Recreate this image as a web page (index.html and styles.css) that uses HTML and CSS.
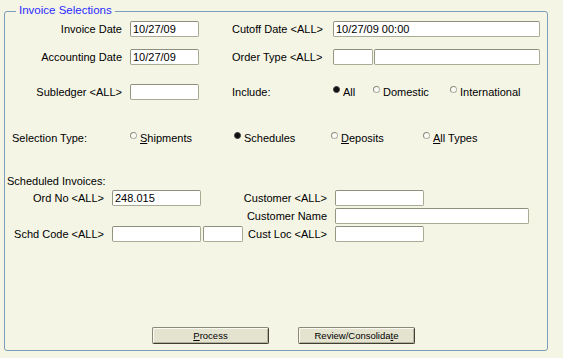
FILE: index.html
```html
<!DOCTYPE html>
<html lang="en">
<head>
    <meta charset="UTF-8">
    <title>Invoice Selections</title>
    <link rel="stylesheet" href="styles.css">
</head>
<body>

<div class="group">
    <div class="legend">Invoice Selections</div>

    <div class="row row-1">
        <span class="lbl lbl-left">Invoice Date</span>
        <input class="fld fld-date" type="text" value="10/27/09">
        <span class="lbl lbl-right">Cutoff Date &lt;ALL&gt;</span>
        <input class="fld fld-wide" type="text" value="10/27/09 00:00">
    </div>

    <div class="row row-2">
        <span class="lbl lbl-left">Accounting Date</span>
        <input class="fld fld-date" type="text" value="10/27/09">
        <span class="lbl lbl-right">Order Type &lt;ALL&gt;</span>
        <input class="fld fld-code" type="text">
        <input class="fld fld-desc" type="text">
    </div>

    <div class="row row-3">
        <span class="lbl lbl-left">Subledger &lt;ALL&gt;</span>
        <input class="fld fld-date" type="text">
        <span class="lbl lbl-right">Include:</span>
        <span class="radio w-all"><i class="dot on"></i>All</span>
        <span class="radio w-dom"><i class="dot"></i>Domestic</span>
        <span class="radio"><i class="dot"></i>International</span>
    </div>

    <div class="row row-4">
        <span class="lbl lbl-sel">Selection Type:</span>
        <span class="radio w-ship"><i class="dot"></i><u>S</u>hipments</span>
        <span class="radio w-sched"><i class="dot on"></i>Schedules</span>
        <span class="radio w-dep"><i class="dot"></i><u>D</u>eposits</span>
        <span class="radio"><i class="dot"></i><u>A</u>ll Types</span>
    </div>

    <div class="row row-5">
        <span class="lbl lbl-section">Scheduled Invoices:</span>
    </div>

    <div class="row row-6">
        <span class="lbl lbl-ord">Ord No &lt;ALL&gt;</span>
        <input class="fld fld-ord" type="text" value="248.015">
        <span class="lbl lbl-cust">Customer &lt;ALL&gt;</span>
        <input class="fld fld-ord" type="text">
    </div>

    <div class="row row-7">
        <span class="lbl lbl-name">Customer Name</span>
        <input class="fld fld-name" type="text">
    </div>

    <div class="row row-8">
        <span class="lbl lbl-ord">Schd Code &lt;ALL&gt;</span>
        <input class="fld fld-ord" type="text">
        <input class="fld fld-code fld-sub" type="text">
        <span class="lbl lbl-loc">Cust Loc &lt;ALL&gt;</span>
        <input class="fld fld-ord" type="text">
    </div>

    <div class="row buttons">
        <button class="btn"><u>P</u>rocess</button>
        <button class="btn">Review/Consolida<u>t</u>e</button>
    </div>
</div>

</body>
</html>
```

FILE: styles.css
```css
body {
    margin: 0;
    background: #f5f5e6;
    font-family: "Liberation Sans", Arial, sans-serif;
    font-size: 11px;
    color: #000;
}
.group {
    box-sizing: border-box;
    width: 544px;
    height: 340px;
    margin: 11px 0 0 4px;
    border: 1px solid #7c9cbc;
    border-radius: 3px;
}
.legend {
    width: fit-content;
    height: 12px;
    line-height: 12px;
    margin: -8px 0 0 11px;
    padding: 0 3px;
    background: #f5f5e6;
    color: #2a2aff;
    font-size: 11.5px;
}
.row {
    display: flex;
    align-items: center;
    height: 16px;
    white-space: nowrap;
}
.row-1 { margin-top: 5px; }
.row-2 { margin-top: 12px; }
.row-3 { margin-top: 19px; }
.row-4 { margin-top: 30px; }
.row-5 { margin-top: 28px; height: 14px; }
.row-6 { margin-top: 2px; }
.row-7 { margin-top: 2px; }
.row-8 { margin-top: 2px; }

.lbl {
    line-height: 16px;
}
.lbl-left {
    width: 117px;
    margin-right: 8px;
    text-align: right;
}
.lbl-right {
    width: 101px;
    margin-left: 33px;
}
.lbl-sel {
    width: 118px;
    padding-left: 7px;
}
.lbl-section {
    padding-left: 2px;
}
.lbl-ord {
    width: 99px;
    margin-right: 8px;
    text-align: right;
}
.lbl-cust {
    width: 126px;
    margin-right: 8px;
    text-align: right;
}
.lbl-name {
    width: 322px;
    margin-right: 8px;
    text-align: right;
}
.lbl-loc {
    width: 84px;
    margin-right: 8px;
    text-align: right;
}

.fld {
    box-sizing: border-box;
    height: 16px;
    margin: 0;
    padding: 0 2px;
    border: 1px solid #a9ab94;
    border-top-color: #8e8f7c;
    border-left-color: #95967f;
    border-radius: 2px;
    background: #fff;
    font-family: "Liberation Sans", Arial, sans-serif;
    font-size: 11px;
    color: #000;
    outline: none;
}
.fld-date { width: 69px; }
.fld-wide { width: 207px; }
.fld-code { width: 40px; }
.fld-desc { width: 166px; margin-left: 1px; }
.fld-ord { width: 89px; }
.fld-sub { margin-left: 2px; }
.fld-name { width: 194px; }

.radio {
    display: flex;
    align-items: center;
    line-height: 16px;
}
.w-all { width: 40px; }
.w-dom { width: 77px; }
.w-ship { width: 104px; }
.w-sched { width: 97px; }
.w-dep { width: 92px; }
.dot {
    box-sizing: border-box;
    width: 7px;
    height: 7px;
    margin: -5px 3px 0 0;
    border: 1px solid #b2b2a4;
    border-top-color: #8d8d80;
    border-left-color: #8d8d80;
    border-radius: 50%;
    background: #fcfcf6;
}
.dot.on {
    border-color: #3a3a3a;
    background: #111;
}

.buttons {
    margin-top: 85px;
    height: 17px;
    padding-left: 147px;
    gap: 29px;
}
.btn {
    box-sizing: border-box;
    width: 117px;
    height: 17px;
    padding: 0;
    border: 1px solid #8a8a78;
    border-right-color: #3f3f33;
    border-bottom-color: #3f3f33;
    border-radius: 2px;
    background: #e4e3cf;
    box-shadow: inset 1px 1px #fbfbf1, inset -1px -1px #b3b29d;
    font-family: "Liberation Sans", Arial, sans-serif;
    font-size: 9.5px;
    color: #000;
}
```
